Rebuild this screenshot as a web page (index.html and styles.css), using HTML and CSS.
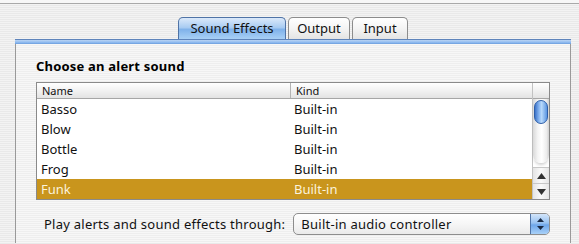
FILE: index.html
```html
<!DOCTYPE html>
<html lang="en">
<head>
  <meta charset="UTF-8">
  <meta name="viewport" content="width=device-width, initial-scale=1.0">
  <title>Sound</title>
  <link rel="stylesheet" href="styles.css">
</head>
<body>
  <div class="toolbar-edge"></div>

  <div class="window">
    <div class="tabs">
      <div class="tab tab-selected">Sound Effects</div>
      <div class="tab tab-output">Output</div>
      <div class="tab tab-input">Input</div>
    </div>

    <div class="panel">
      <h2 class="panel-title">Choose an alert sound</h2>

      <div class="table">
        <div class="table-main">
          <div class="row header">
            <div class="cell name">Name</div>
            <div class="cell kind">Kind</div>
          </div>
          <div class="row">
            <div class="cell name">Basso</div>
            <div class="cell kind">Built-in</div>
          </div>
          <div class="row">
            <div class="cell name">Blow</div>
            <div class="cell kind">Built-in</div>
          </div>
          <div class="row">
            <div class="cell name">Bottle</div>
            <div class="cell kind">Built-in</div>
          </div>
          <div class="row">
            <div class="cell name">Frog</div>
            <div class="cell kind">Built-in</div>
          </div>
          <div class="row selected">
            <div class="cell name">Funk</div>
            <div class="cell kind">Built-in</div>
          </div>
        </div>

        <div class="scroll-column">
          <div class="corner"></div>
          <div class="scrollbar">
            <div class="track">
              <div class="thumb"></div>
            </div>
            <div class="arrow arrow-up">
              <svg width="9" height="6" viewBox="0 0 9 6"><path d="M4.5 0 L9 6 L0 6 Z" fill="#333"/></svg>
            </div>
            <div class="arrow arrow-down">
              <svg width="9" height="6" viewBox="0 0 9 6"><path d="M0 0 L9 0 L4.5 6 Z" fill="#333"/></svg>
            </div>
          </div>
        </div>
      </div>

      <div class="output-row">
        <span class="output-label">Play alerts and sound effects through:</span>
        <div class="popup">
          <span class="popup-text">Built-in audio controller</span>
          <div class="popup-arrows">
            <svg width="7" height="12" viewBox="0 0 7 12">
              <path d="M3.5 0 L7 4 L0 4 Z" fill="#1a2a45"/>
              <path d="M0 8 L7 8 L3.5 12 Z" fill="#1a2a45"/>
            </svg>
          </div>
        </div>
      </div>
    </div>
  </div>
</body>
</html>
```

FILE: styles.css
```css
body {
  margin: 0;
  font-family: "Noto Sans", "DejaVu Sans", sans-serif;
  font-size: 13px;
  color: #111;
  background: repeating-linear-gradient(to bottom, #f3f3f3 0, #f3f3f3 1px, #e9e9e9 1px, #e9e9e9 2px);
  height: 244px;
  overflow: hidden;
}

.toolbar-edge {
  height: 3px;
  background: #f7f7f7;
  border-bottom: 1px solid #a9a9a9;
}

.window {
  margin-left: 15px;
  width: 556px;
  padding-top: 13px;
}

/* tabs */
.tabs {
  display: flex;
  justify-content: center;
  gap: 2px;
}

.tab {
  height: 21px;
  line-height: 21px;
  text-align: center;
  border: 1px solid #8c8c8c;
  border-bottom: none;
  border-radius: 5px 5px 0 0;
  background: linear-gradient(to bottom, #ffffff 0%, #f4f4f4 50%, #e4e4e4 100%);
  color: #111;
}

.tab-selected {
  width: 106px;
  border-color: #4f73a6;
  background: linear-gradient(to bottom, #dbe9fa 0%, #a9ccf2 45%, #80b2ea 55%, #a8d0f6 100%);
}

.tab-output {
  width: 60px;
}

.tab-input {
  width: 54px;
}

/* panel */
.panel {
  border: 1px solid #9a9a9a;
  border-top: 5px solid #7eaee6;
  border-bottom: none;
  background: repeating-linear-gradient(to bottom, #f7f7f7 0, #f7f7f7 1px, #eeeeee 1px, #eeeeee 2px);
  padding: 14px 20px 8px;
  position: relative;
}

.panel::before {
  content: "";
  position: absolute;
  left: -1px;
  right: -1px;
  top: -5px;
  height: 5px;
  background: linear-gradient(to bottom, #b9d4f3 0%, #8fbaf0 60%, #6b9ddc 100%);
  border-top: 1px solid #5e84bb;
  box-sizing: border-box;
}

.panel-title {
  margin: 0 0 8px;
  font-size: 13px;
  font-weight: bold;
  line-height: 16px;
  letter-spacing: 0.2px;
  color: #000;
}

/* table */
.table {
  display: flex;
  border: 1px solid #8a8a8a;
  background: #fff;
}

.table-main {
  flex: 1;
}

.row {
  display: flex;
  height: 20px;
  line-height: 20px;
}

.row.header {
  height: 15px;
  line-height: 15px;
  font-size: 11px;
  background: linear-gradient(to bottom, #ffffff 0%, #f2f2f2 50%, #e3e3e3 100%);
  border-bottom: 1px solid #a6a6a6;
}

.cell {
  padding-left: 4px;
  white-space: nowrap;
}

.cell.name {
  width: 248px;
}

.header .cell.name {
  padding-left: 5px;
  border-right: 1px solid #b3b3b3;
}

.cell.kind {
  flex: 1;
  padding-left: 5px;
}

.row.selected {
  background: #c9951d;
  color: #fbf3dc;
}

/* scrollbar */
.scroll-column {
  width: 16px;
  border-left: 1px solid #c2c2c2;
  display: flex;
  flex-direction: column;
}

.corner {
  height: 15px;
  border-bottom: 1px solid #a6a6a6;
  background: linear-gradient(to bottom, #ffffff 0%, #f2f2f2 50%, #e3e3e3 100%);
}

.scrollbar {
  flex: 1;
  display: flex;
  flex-direction: column;
}

.track {
  flex: 1;
  background: linear-gradient(to right, #d9d9d9 0%, #f4f4f4 30%, #ffffff 55%, #ececec 85%, #d0d0d0 100%);
  border-radius: 0 0 8px 8px;
  box-shadow: 0 3px 3px -1px rgba(0, 0, 0, 0.18);
  padding-top: 1px;
}

.thumb {
  margin: 0 1px;
  height: 24px;
  border-radius: 7px;
  border: 1px solid #2f5fa8;
  background: linear-gradient(to right, #3c73c9 0%, #8ab8f2 35%, #b8d9fb 55%, #5a95e2 100%);
  box-sizing: border-box;
}

.arrow {
  height: 16px;
  display: flex;
  align-items: center;
  justify-content: center;
  background: linear-gradient(to right, #e4e4e4 0%, #fafafa 50%, #e6e6e6 100%);
  border-top: 1px solid #c7c7c7;
  box-sizing: border-box;
}

.arrow-up {
  margin-top: 4px;
}

/* output popup */
.output-row {
  display: flex;
  align-items: center;
  gap: 8px;
  margin-top: 13px;
  padding-left: 8px;
  letter-spacing: 0.25px;
}

.output-label {
  white-space: nowrap;
}

.popup {
  width: 257px;
  height: 22px;
  box-sizing: border-box;
  display: flex;
  align-items: center;
  border: 1px solid #8d8d8d;
  border-radius: 5px;
  background: linear-gradient(to bottom, #ffffff 0%, #f6f6f6 50%, #eaeaea 100%);
  overflow: hidden;
}

.popup-text {
  flex: 1;
  padding-left: 7px;
  white-space: nowrap;
}

.popup-arrows {
  width: 18px;
  height: 100%;
  display: flex;
  align-items: center;
  justify-content: center;
  border-left: 1px solid #4f73a6;
  background: linear-gradient(to bottom, #d3e5fa 0%, #98c2f1 45%, #6ea6ea 55%, #a9d1f8 100%);
}
```
